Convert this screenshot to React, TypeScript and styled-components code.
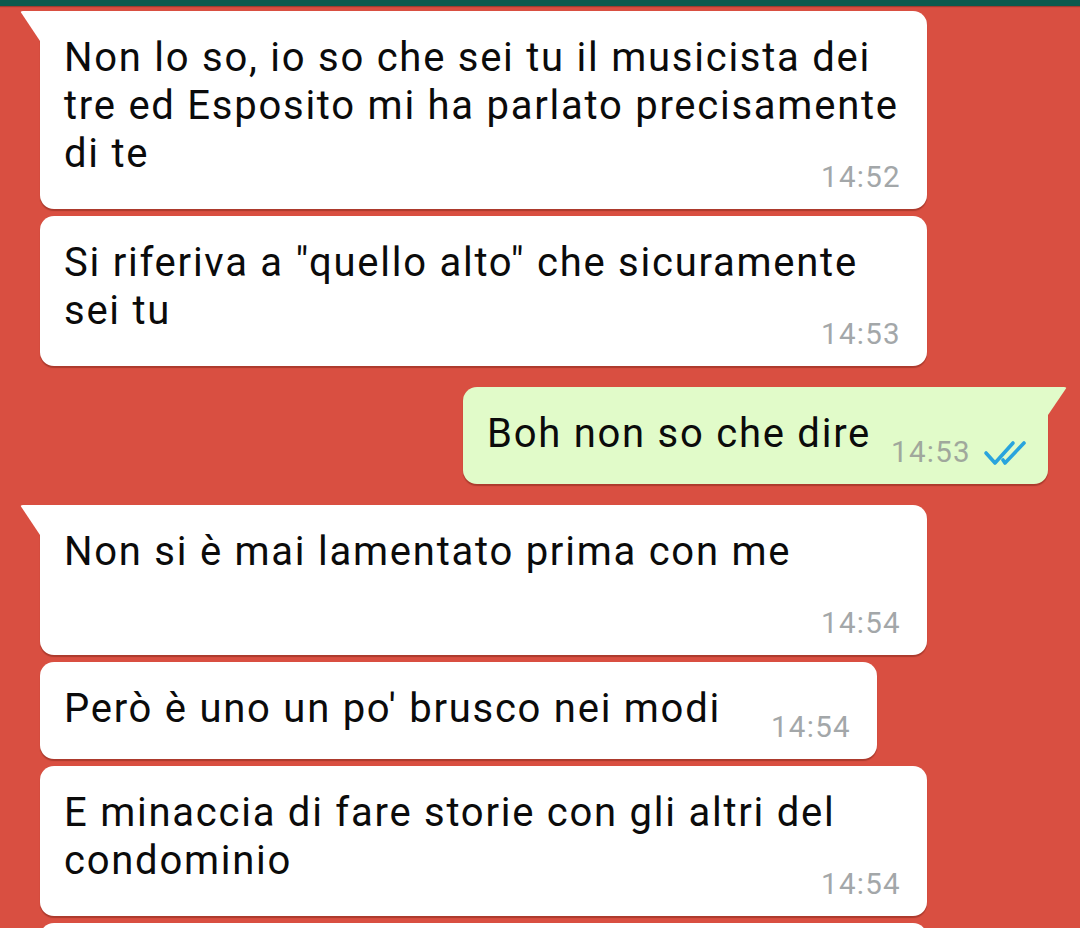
import React from "react";
import styled, { createGlobalStyle, css } from "styled-components";

const GlobalStyle = createGlobalStyle`
  html, body {
    margin: 0;
    padding: 0;
    background: #d94f41;
    overflow: hidden;
  }
  body {
    font-family: Roboto, "Noto Sans", "Liberation Sans", sans-serif;
    -webkit-font-smoothing: antialiased;
  }
`;

const Screen = styled.div`
  width: 1080px;
  height: 928px;
  background: #d94f41;
  display: flex;
  flex-direction: column;
  overflow: hidden;
`;

const TopBar = styled.div`
  height: 6px;
  flex: none;
  background: #0c5a4e;
  box-shadow: 0 1px 1px rgba(0, 0, 0, 0.25);
`;

const Chat = styled.div`
  display: flex;
  flex-direction: column;
  gap: 21px;
  padding: 5px 32px 0 40px;
`;

const Group = styled.div<{ $out?: boolean }>`
  display: flex;
  flex-direction: column;
  gap: 7px;
  align-items: ${(p) => (p.$out ? "flex-end" : "flex-start")};
`;

const Bubble = styled.div<{ $out?: boolean; $tail?: boolean; $full?: boolean }>`
  position: relative;
  box-sizing: border-box;
  max-width: 887px;
  min-height: 60px;
  ${(p) => p.$full && css`width: 887px;`}
  padding: 23px 26px 17px 24px;
  border-radius: 14px;
  background: ${(p) => (p.$out ? "#e1fbc9" : "#ffffff")};
  box-shadow: 0 1.5px 1px rgba(90, 20, 10, 0.35);
  color: #0b0b0b;

  ${(p) =>
    p.$tail &&
    !p.$out &&
    css`
      border-top-left-radius: 0;
      &::before {
        content: "";
        position: absolute;
        left: -20px;
        top: 0;
        width: 20px;
        height: 30px;
        background: #ffffff;
        border-top-left-radius: 3px;
        clip-path: polygon(0 0, 100% 0, 100% 100%);
      }
    `}

  ${(p) =>
    p.$tail &&
    p.$out &&
    css`
      border-top-right-radius: 0;
      &::after {
        content: "";
        position: absolute;
        right: -19px;
        top: 0;
        width: 19px;
        height: 28px;
        background: #e1fbc9;
        border-top-right-radius: 3px;
        clip-path: polygon(0 0, 100% 0, 0 100%);
      }
    `}
`;

const Text = styled.div<{ $inline?: boolean }>`
  font-size: 40px;
  line-height: 48px;
  letter-spacing: 1.75px;
  white-space: pre-wrap;
  ${(p) => p.$inline && css`padding-bottom: 9px;`}
`;

const Row = styled.div<{ $gap: number }>`
  display: flex;
  align-items: flex-end;
  gap: ${(p) => p.$gap}px;
`;

const Meta = styled.div<{ $stacked?: boolean }>`
  display: flex;
  justify-content: flex-end;
  align-items: center;
  gap: 12px;
  flex: none;
  ${(p) => p.$stacked && css`margin-top: -16px;`}
`;

const Time = styled.span<{ $out?: boolean }>`
  font-size: 29.5px;
  line-height: 30px;
  letter-spacing: 1.3px;
  color: ${(p) => (p.$out ? "#a0a89c" : "#a3a7a9")};
`;

const Ticks = () => (
  <svg width="44" height="26" viewBox="0 0 44 26" fill="none" style={{ marginTop: 2, marginRight: -5 }}>
    <path
      d="M3 13 L12 23 L30 3"
      stroke="#29a4dd"
      strokeWidth="3.6"
      strokeLinecap="round"
      strokeLinejoin="round"
    />
    <path
      d="M20 20 L22 23 L41 3"
      stroke="#29a4dd"
      strokeWidth="3.6"
      strokeLinecap="round"
      strokeLinejoin="round"
    />
  </svg>
);

type Msg = {
  text: string;
  time: string;
  layout: "stacked" | "inline";
  tail?: boolean;
  full?: boolean;
  gap?: number;
};

const Message = ({ m, out }: { m: Msg; out?: boolean }) => (
  <Bubble $out={out} $tail={m.tail} $full={m.full}>
    {m.layout === "stacked" ? (
      <>
        <Text>{m.text}</Text>
        <Meta $stacked>
          <Time $out={out}>{m.time}</Time>
          {out && <Ticks />}
        </Meta>
      </>
    ) : (
      <Row $gap={m.gap ?? 24}>
        <Text $inline>{m.text}</Text>
        <Meta>
          <Time $out={out}>{m.time}</Time>
          {out && <Ticks />}
        </Meta>
      </Row>
    )}
  </Bubble>
);

const groups: { out?: boolean; msgs: Msg[] }[] = [
  {
    msgs: [
      {
        text: "Non lo so, io so che sei tu il musicista dei tre ed Esposito mi ha parlato precisamente di te",
        time: "14:52",
        layout: "stacked",
        tail: true,
        full: true,
      },
      {
        text: "Si riferiva a \"quello alto\" che sicuramente sei tu",
        time: "14:53",
        layout: "stacked",
        full: true,
      },
    ],
  },
  {
    out: true,
    msgs: [
      {
        text: "Boh non so che dire",
        time: "14:53",
        layout: "inline",
        tail: true,
        gap: 20,
      },
    ],
  },
  {
    msgs: [
      {
        text: "Non si è mai lamentato prima con me\n\u00a0",
        time: "14:54",
        layout: "stacked",
        tail: true,
        full: true,
      },
      {
        text: "Però è uno un po' brusco nei modi",
        time: "14:54",
        layout: "inline",
        gap: 50,
      },
      {
        text: "E minaccia di fare storie con gli altri del condominio",
        time: "14:54",
        layout: "stacked",
        full: true,
      },
    ],
  },
];

export default function App() {
  return (
    <>
      <GlobalStyle />
      <Screen>
        <TopBar />
        <Chat>
          {groups.map((g, i) => (
            <Group key={i} $out={g.out}>
              {g.msgs.map((m, j) => (
                <Message key={j} m={m} out={g.out} />
              ))}
              {i === groups.length - 1 && <Bubble $full />}
            </Group>
          ))}
        </Chat>
      </Screen>
    </>
  );
}
